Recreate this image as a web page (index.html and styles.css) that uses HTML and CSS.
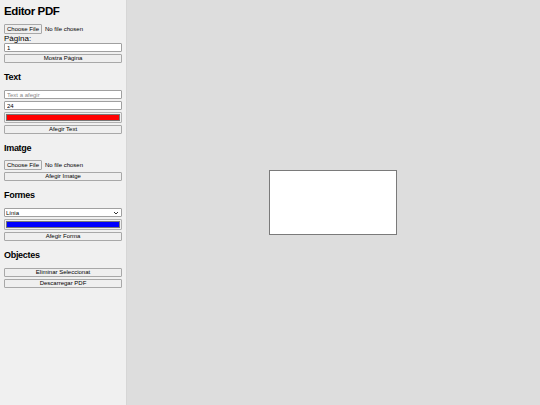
FILE: index.html
```html
<!DOCTYPE html>
<html lang="ca">
<head>
    <meta charset="UTF-8">
    <meta name="viewport" content="width=device-width, initial-scale=1.0">
    <title>Editor PDF</title>
    <link rel="stylesheet" href="styles.css">
</head>
<body>

    <div class="sidebar">
        <h1>Editor PDF</h1>
        <input type="file" class="file">
        <label class="label">Pàgina:</label>
        <input type="number" class="field" value="1">
        <button class="btn">Mostra Pàgina</button>

        <h3>Text</h3>
        <input type="text" class="field" placeholder="Text a afegir">
        <input type="number" class="field" value="24">
        <input type="color" class="color" value="#ff0000">
        <button class="btn">Afegir Text</button>

        <h3>Imatge</h3>
        <input type="file" class="file">
        <button class="btn">Afegir Imatge</button>

        <h3>Formes</h3>
        <select class="field select">
            <option>Línia</option>
            <option>Rectangle</option>
            <option>Cercle</option>
        </select>
        <input type="color" class="color" value="#0000ff">
        <button class="btn">Afegir Forma</button>

        <h3>Objectes</h3>
        <button class="btn">Eliminar Seleccionat</button>
        <button class="btn">Descarregar PDF</button>
    </div>

    <div class="main">
        <div class="canvas"></div>
    </div>

</body>
</html>
```

FILE: styles.css
```css
body {
    margin: 0;
    height: 405px;
    display: flex;
    font-family: "Liberation Sans", Arial, sans-serif;
    font-size: 8px;
    color: #000;
}
.sidebar {
    width: 118px;
    padding: 4px;
    background-color: #f0f0f0;
    border-right: 1px solid #d6d6d6;
    display: flex;
    flex-direction: column;
}
h1 {
    font-size: 11.5px;
    letter-spacing: -0.4px;
    margin: 0 0 6px;
    line-height: 14px;
}
h3 {
    font-size: 9px;
    letter-spacing: -0.3px;
    margin: 8px 0 6px;
    line-height: 11px;
}
.label {
    line-height: 8px;
    margin-bottom: -1px;
}
.field {
    box-sizing: border-box;
    width: 100%;
    height: 9px;
    margin: 1px 0;
    padding: 0 2px;
    font-family: inherit;
    font-size: 6px;
    border: 1px solid #a0a0a0;
    border-radius: 1px;
    background: #fff;
}
.field::placeholder {
    color: #888;
}
.field::-webkit-inner-spin-button {
    display: none;
}
.select {
    appearance: none;
    padding: 0 1px;
    background: #fff url("data:image/svg+xml,%3Csvg xmlns='http://www.w3.org/2000/svg' width='6' height='4'%3E%3Cpath d='M1 1l2 2 2-2' fill='none' stroke='%23333' stroke-width='1'/%3E%3C/svg%3E") no-repeat right 2px center;
}
.btn {
    box-sizing: border-box;
    width: 100%;
    height: 9px;
    margin: 1px 0;
    padding: 0;
    font-family: inherit;
    font-size: 6px;
    line-height: 7px;
    background-color: #efefef;
    border: 1px solid #a8a8a8;
    border-radius: 1px;
}
.file {
    height: 10px;
    margin: 0 0 1px;
    font-family: inherit;
    font-size: 6px;
}
.file::file-selector-button {
    height: 10px;
    padding: 0 2px;
    margin-right: 3px;
    font-family: inherit;
    font-size: 6px;
    background-color: #efefef;
    border: 1px solid #a8a8a8;
    border-radius: 1px;
}
.color {
    box-sizing: border-box;
    width: 100%;
    height: 11px;
    margin: 1px 0;
    padding: 1px 1px;
    border: 1px solid #b0b0b0;
    border-radius: 1px;
    background: #efefef;
}
.color::-webkit-color-swatch-wrapper {
    padding: 0;
}
.color::-webkit-color-swatch {
    border: 1px solid #777;
}
.main {
    flex: 1;
    background-color: #dddddd;
    display: flex;
    align-items: center;
    justify-content: center;
}
.canvas {
    width: 126px;
    height: 63px;
    margin-right: 1px;
    background-color: #fff;
    border: 1px solid #7a7a7a;
}
```
